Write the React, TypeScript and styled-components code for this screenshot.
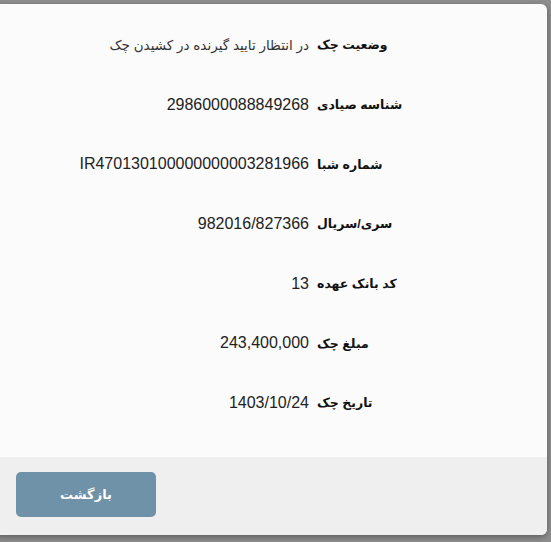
import React from 'react'
import styled, { createGlobalStyle } from 'styled-components'

const GlobalStyle = createGlobalStyle`
  html, body {
    margin: 0;
    padding: 0;
    background: #8e8e8e;
    overflow: hidden;
  }
  body {
    font-family: "Liberation Sans", "DejaVu Sans", sans-serif;
  }
`

const Backdrop = styled.div`
  width: 551px;
  height: 542px;
  padding-top: 4px;
  box-sizing: border-box;
`

const Dialog = styled.div`
  margin-left: -6px;
  width: 553px;
  height: 531px;
  display: flex;
  flex-direction: column;
  border-radius: 6px;
  overflow: hidden;
  background: #fbfbfb;
  box-shadow: 0 2px 6px rgba(0, 0, 0, 0.35);
`

const Body = styled.div`
  flex: 1;
  display: flex;
  flex-direction: column;
  padding: 11px 0 0 6px;
`

const Row = styled.div`
  display: grid;
  grid-template-columns: 309px 1fr;
  column-gap: 8px;
  align-items: center;
  height: 59.7px;
`

const Value = styled.span`
  direction: rtl;
  text-align: right;
  font-size: 16px;
  color: #222;
  unicode-bidi: plaintext;
`

const ValueText = styled(Value)`
  font-size: 13.5px;
  color: #333;
  margin-right: 0;
`

const Label = styled.span`
  direction: rtl;
  text-align: left;
  font-size: 12.5px;
  font-weight: bold;
  color: #111;
`

const Footer = styled.div`
  height: 78px;
  box-sizing: border-box;
  background: #efefef;
  display: flex;
  align-items: flex-start;
  padding: 15px 0 0 22px;
`

const BackButton = styled.button`
  all: unset;
  cursor: pointer;
  width: 140px;
  height: 45px;
  border-radius: 5px;
  background: #6f92a8;
  color: #fff;
  font-size: 13px;
  font-weight: bold;
  display: flex;
  align-items: center;
  justify-content: center;
  direction: rtl;
`

const rows: { label: string, value: string, text?: boolean }[] = [
  { label: 'وضعیت چک', value: 'در انتظار تایید گیرنده در کشیدن چک', text: true },
  { label: 'شناسه صیادی', value: '2986000088849268' },
  { label: 'شماره شبا', value: 'IR470130100000000003281966' },
  { label: 'سری/سریال', value: '982016/827366' },
  { label: 'کد بانک عهده', value: '13' },
  { label: 'مبلغ چک', value: '243,400,000' },
  { label: 'تاریخ چک', value: '1403/10/24' },
]

const App = () => {
  return (
    <>
      <GlobalStyle />
      <Backdrop>
        <Dialog>
          <Body>
            {rows.map((row) => (
              <Row key={row.label}>
                {row.text ? <ValueText>{row.value}</ValueText> : <Value>{row.value}</Value>}
                <Label>{row.label}</Label>
              </Row>
            ))}
          </Body>
          <Footer>
            <BackButton>بازگشت</BackButton>
          </Footer>
        </Dialog>
      </Backdrop>
    </>
  )
}

export default App
